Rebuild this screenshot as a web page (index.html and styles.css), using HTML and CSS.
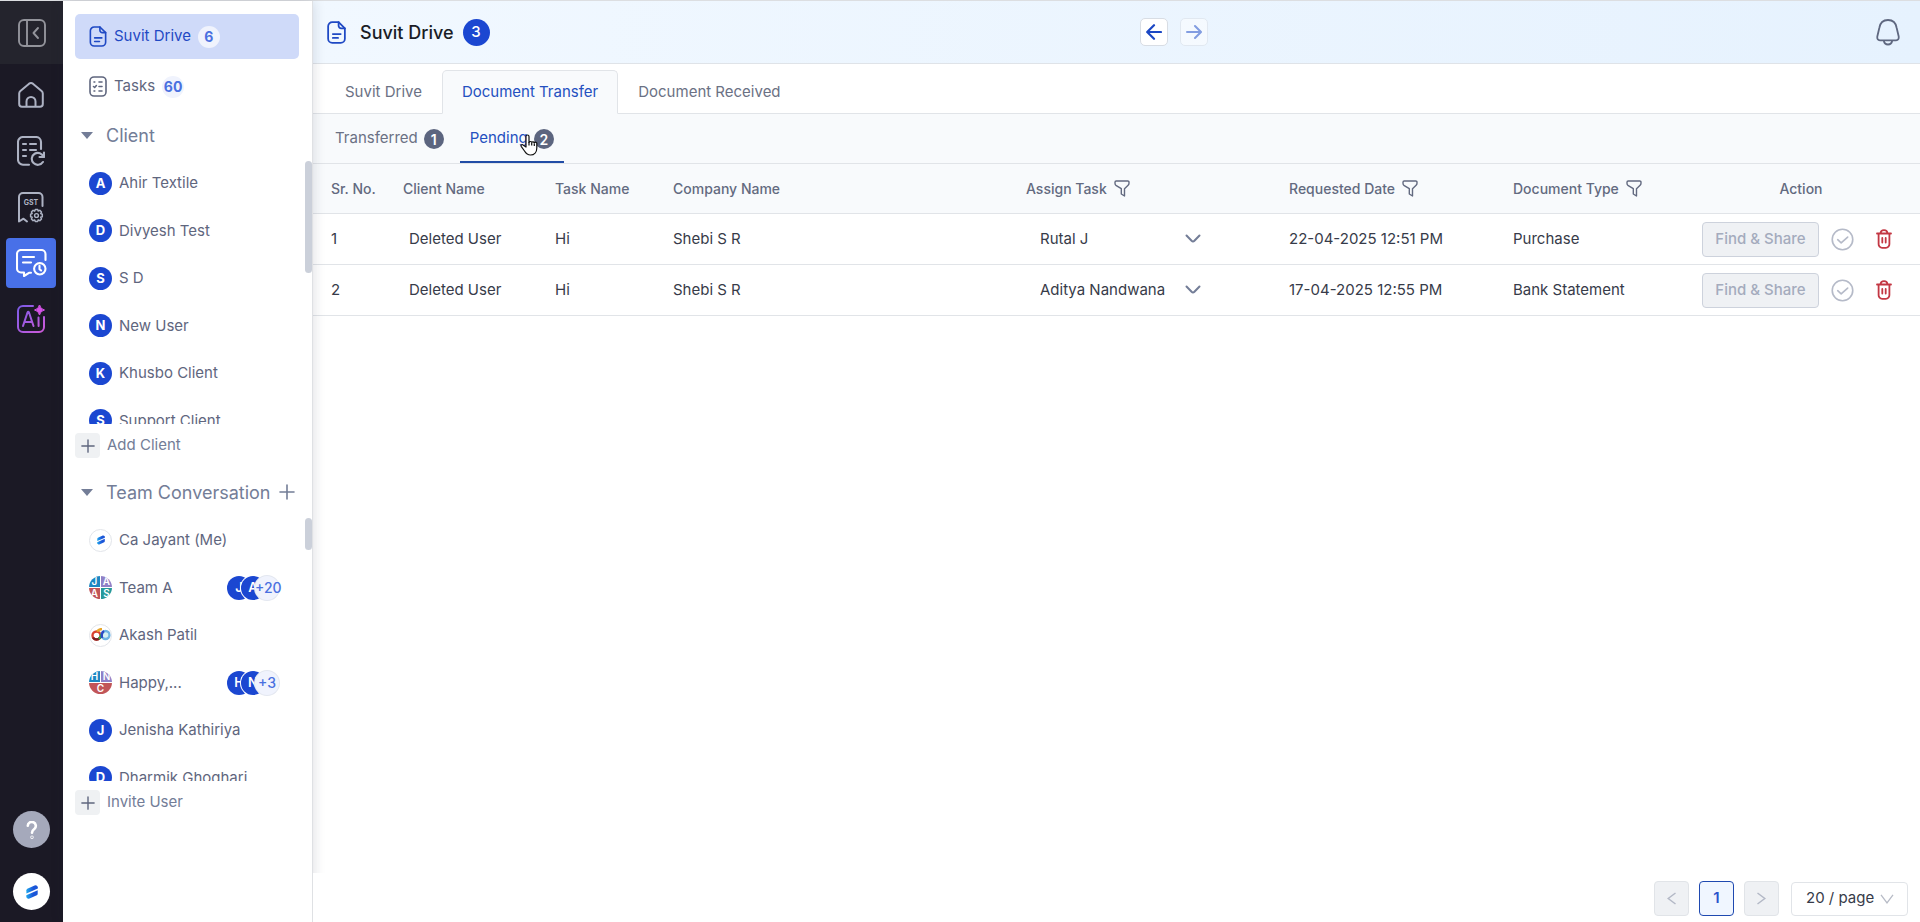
FILE: index.html
```html
<!DOCTYPE html>
<html lang="en">
<head>
<meta charset="utf-8">
<title>Suvit Drive</title>
<link rel="stylesheet" href="styles.css">
</head>
<body>
<svg class="defs" aria-hidden="true">
  <linearGradient id="brand" x1="0" y1="0" x2="1" y2="0"><stop offset="0" stop-color="#1fa8ee"/><stop offset=".6" stop-color="#1b55d8"/></linearGradient>
  <symbol id="doc" viewBox="0 0 18 22"><g fill="none" stroke="currentColor" stroke-width="1.7" stroke-linecap="round" stroke-linejoin="round"><path d="M11 1H5a4 4 0 0 0-4 4v12a4 4 0 0 0 4 4h8a4 4 0 0 0 4-4V7z"/><path d="M11 1v3.500A2.500 2.500 0 0 0 13.500 7H17M5.500 12.500h7.500M5.500 16.200h5"/></g></symbol>
  <symbol id="funnel" viewBox="0 0 16 17"><path d="M2.200 1h11.600a1.200 1.200 0 0 1 1.200 1.200v1a3 3 0 0 1-.9 2.100L10.500 8.700V16l-3.200-2V8.700L1.900 5.300A3 3 0 0 1 1 3.200v-1A1.200 1.200 0 0 1 2.200 1z" fill="none" stroke="currentColor" stroke-width="1.400" stroke-linejoin="round"/></symbol>
  <symbol id="chev" viewBox="0 0 16 10"><path d="M1.500 1.500 6.600 6.800a2 2 0 0 0 2.800 0l5.100-5.300" fill="none" stroke="currentColor" stroke-width="2" stroke-linecap="round"/></symbol>
  <symbol id="plus" viewBox="0 0 16 16"><path d="M8 1v14M1 8h14" fill="none" stroke="currentColor" stroke-width="1.600" stroke-linecap="round"/></symbol>
  <symbol id="check" viewBox="0 0 24 24"><g fill="none" stroke="currentColor" stroke-width="1.700" stroke-linecap="round" stroke-linejoin="round"><circle cx="12" cy="12" r="10.700"/><path d="m7 12.200 3.600 3.300 6.800-6"/></g></symbol>
  <symbol id="trash" viewBox="0 0 16 20"><g fill="none" stroke="currentColor" stroke-width="1.800" stroke-linecap="round" stroke-linejoin="round"><path d="M1 4.500h14M2.600 4.500V15a3.600 3.600 0 0 0 3.600 3.800h3.600a3.600 3.600 0 0 0 3.600-3.800V4.500M4.500 4.200C4.700 2 6 1.200 8 1.200s3.300.8 3.500 3M6.300 9v4.500M9.700 9v4.500"/></g></symbol>
  <symbol id="mark" viewBox="0 0 12 14"><path d="M.4 8.600V5.200q0-1 .9-1.500L8.600.4q1-.4 1.900.2l.9.600q.4.300.4 1v1.400z" fill="url(#brand)"/><path d="M11.700 5.300v3.400q0 1-.9 1.500l-7.300 3.400q-1 .4-1.900-.2l-.9-.6q-.4-.4-.4-1v-1.500z" fill="url(#brand)"/></symbol>
</svg>

<div class="app">
  <nav class="rail" aria-label="Main">
    <button class="rail-toggle" aria-label="Collapse sidebar"><svg width="28" height="28" viewBox="0 0 28 28" fill="none" stroke="currentColor" stroke-width="1.900" stroke-linecap="round" stroke-linejoin="round"><rect x="1" y="1" width="26" height="26" rx="5"/><path d="M9 1v26M20 9l-4.500 5 4.500 5"/></svg></button>
    <div class="rail-items">
      <a href="#" class="rail-link" aria-label="Home"><svg width="26" height="26" viewBox="0 0 26 26" fill="none" stroke="currentColor" stroke-width="2" stroke-linejoin="round"><path d="M1.200 22V11.500q0-1.600 1.200-2.600L10.800 1.900q2.200-1.600 4.400 0l8.400 7q1.200 1 1.200 2.600V22q0 2.800-2.800 2.800H4Q1.200 24.800 1.200 22z"/><path d="M8.500 24.500v-5a4.500 4.500 0 0 1 9 0v5"/></svg></a>
      <a href="#" class="rail-link" aria-label="Reports"><svg width="28" height="30" viewBox="0 0 28 30" fill="none" stroke="currentColor" stroke-width="2.100" stroke-linecap="round" stroke-linejoin="round"><path d="M12 28.800H6a5 5 0 0 1-5-5V6a5 5 0 0 1 5-5h13a5 5 0 0 1 5 5v7"/><path d="M6 8h3M13 8h6M6 14h3M13 14h6M6 20h3"/><path d="M26.500 21a6 6 0 1 0-.6 5M27 16.500V21h-4.500"/></svg></a>
      <a href="#" class="rail-link" aria-label="GST"><svg width="26" height="31" viewBox="0 0 26 31" fill="none" stroke="currentColor" stroke-width="2" stroke-linecap="round" stroke-linejoin="round"><path d="M24.500 14V5a4 4 0 0 0-4-4H5a4 4 0 0 0-4 4v24.500l4.500-2.800L9 29.500"/><text x="13" y="13" text-anchor="middle" class="gst">GST</text><circle cx="18.500" cy="23.500" r="1.900" stroke-width="1.400"/><path stroke-width="1.500" d="m17.300 17.500 2.400 0 .5 1.600 1.600-.8 1.700 1.700-.8 1.600 1.600.7v2.400l-1.600.6.8 1.700-1.700 1.700-1.600-.8-.6 1.600h-2.300l-.6-1.600-1.600.8-1.700-1.700.8-1.700-1.600-.6v-2.400l1.600-.7-.8-1.600 1.700-1.700 1.600.8z"/></svg></a>
      <a href="#" class="rail-link active" aria-label="Conversations"><svg width="31" height="28" viewBox="0 0 31 28" fill="none" stroke="currentColor" stroke-width="2.100" stroke-linecap="round" stroke-linejoin="round"><path d="M29.500 11V5a4 4 0 0 0-4-4H5a4 4 0 0 0-4 4v14.500a4 4 0 0 0 4 4h3v3.500l5-3.200h2"/><path d="M7 8h11M7 13.500h8"/><circle cx="23.800" cy="19.800" r="5.700"/><path d="M23.500 16.700v3.400l1.600 1.400"/></svg></a>
      <a href="#" class="rail-link" aria-label="AI"><svg width="28" height="28" viewBox="0 0 28 28" fill="none" stroke-linecap="round" stroke-linejoin="round"><defs><linearGradient id="ai" gradientUnits="userSpaceOnUse" x1="0" y1="0" x2="28" y2="28"><stop offset="0" stop-color="#7a5be8"/><stop offset="1" stop-color="#d05ad8"/></linearGradient></defs><g stroke="url(#ai)" stroke-width="2"><path d="M16 1H6a5 5 0 0 0-5 5v16a5 5 0 0 0 5 5h16a5 5 0 0 0 5-5V12"/><path d="m6 21 4.500-13.500q.7-1.400 1.500 0L16.500 21M7.500 17h7.500M21.500 12.500l.1 8.500"/></g><path d="M22.500 0q.8 4.200 5 5-4.200.8-5 5-.8-4.200-5-5 4.200-.8 5-5z" fill="#d452e6" stroke="#d452e6"/></svg></a>
    </div>
    <div class="rail-foot">
      <button class="help" aria-label="Help"><svg width="12" height="18" viewBox="0 0 12 18" fill="none" stroke="#fff" stroke-width="2.600" stroke-linecap="round"><path d="M1.800 4.800a4 4 0 1 1 6.700 3C6.800 9 6 9.800 6 11.800"/><circle cx="6" cy="16.200" r=".4"/></svg></button>
      <button class="profile" aria-label="Profile"><svg width="12" height="14"><use href="#mark"/></svg></button>
    </div>
  </nav>

  <aside class="side">
    <a href="#" class="side-link current"><svg width="18" height="21"><use href="#doc"/></svg><span>Suvit Drive</span><span class="pill">6</span></a>
    <a href="#" class="side-link"><svg width="18" height="21" viewBox="0 0 18 21" fill="none" stroke="currentColor" stroke-width="1.600" stroke-linecap="round"><rect x="1" y="1" width="16" height="19" rx="4"/><path d="M10 6h3M10 10.500h3M10 15h3M5 6h.8M5 15h.8M4.500 10.500l1.200 1 1.700-2"/></svg><span>Tasks</span><span class="pill">60</span></a>

    <h2 class="group group-client"><button class="group-toggle"><i class="tri"></i>Client</button></h2>
    <div class="list-wrap">
      <ul class="list">
        <li><span class="av">A</span>Ahir Textile</li>
        <li><span class="av">D</span>Divyesh Test</li>
        <li><span class="av">S</span>S D</li>
        <li><span class="av">N</span>New User</li>
        <li><span class="av">K</span>Khusbo Client</li>
        <li><span class="av">S</span>Support Client</li>
      </ul>
      <i class="thumb thumb-client"></i>
    </div>
    <button class="add"><span class="add-box"><svg width="14" height="14"><use href="#plus"/></svg></span>Add Client</button>

    <h2 class="group group-team"><button class="group-toggle"><i class="tri"></i>Team Conversation</button><button class="group-add" aria-label="New conversation"><svg width="16" height="16"><use href="#plus"/></svg></button></h2>
    <div class="list-wrap">
      <ul class="list">
        <li><span class="av pic"><svg width="8" height="10"><use href="#mark"/></svg></span>Ca Jayant (Me)</li>
        <li><span class="av quad"><b class="q1">J</b><b class="q2">A</b><b class="q3">A</b><b class="q4">S</b></span>Team A<span class="stack"><span class="av">J</span><span class="av">A</span><span class="av more">+20</span></span></li>
        <li><span class="av pic"><svg width="20" height="14" viewBox="0 0 20 14" fill="none" stroke-width="2.400"><circle cx="5.500" cy="7.500" r="4" stroke="#d8412f"/><path d="M2 9.500a4 4 0 0 0 7 0" stroke="#7a1f22"/><circle cx="14.500" cy="7" r="4" fill="#d5f0f2" stroke="#6fb4e4"/><path d="M6 3.500q2-2.500 5-2.500" stroke="#e8a62c"/><path d="M8 11q2-2 2.500-5" stroke="#36b04c"/><path d="M11 10q-1-5 2-7" stroke="#2b49c4"/></svg></span>Akash Patil</li>
        <li><span class="av quad"><b class="q1">H</b><b class="q2">N</b><b class="q3 wide">C</b></span>Happy,...<span class="stack"><span class="av">H</span><span class="av">N</span><span class="av more">+3</span></span></li>
        <li><span class="av">J</span>Jenisha Kathiriya</li>
        <li><span class="av">D</span>Dharmik Ghoghari</li>
      </ul>
      <i class="thumb thumb-team"></i>
    </div>
    <button class="add"><span class="add-box"><svg width="14" height="14"><use href="#plus"/></svg></span>Invite User</button>
  </aside>

  <main class="main">
    <header class="top">
      <svg class="top-icon" width="19" height="23"><use href="#doc"/></svg>
      <h1>Suvit Drive</h1>
      <span class="count">3</span>
      <div class="history">
        <button aria-label="Back"><svg width="16" height="16" viewBox="0 0 16 16" fill="none" stroke="currentColor" stroke-width="2.200" stroke-linecap="round" stroke-linejoin="round"><path d="M15 8H1.500M8 1.200 1.200 8 8 14.800"/></svg></button>
        <button aria-label="Forward" disabled><svg width="16" height="16" viewBox="0 0 16 16" fill="none" stroke="currentColor" stroke-width="2" stroke-linecap="round" stroke-linejoin="round"><path d="M1 8h13.500M9 2l6 6-6 6"/></svg></button>
      </div>
      <button class="bell" aria-label="Notifications"><svg width="24" height="27" viewBox="0 0 24 27" fill="none" stroke="currentColor" stroke-width="1.800" stroke-linejoin="round"><path d="M12 1C7 1 4 4.500 3.300 9L1.300 17.500Q.8 21 4 21.300h16q3.200-.3 2.700-3.800L20.700 9C20 4.500 17 1 12 1z"/><path d="M7.800 21.500q.6 4 4.200 4t4.200-4"/></svg></button>
    </header>

    <nav class="tabs" aria-label="Drive sections">
      <a href="#">Suvit Drive</a>
      <a href="#" class="on" aria-current="page">Document Transfer</a>
      <a href="#">Document Received</a>
    </nav>

    <nav class="subtabs" aria-label="Transfer status">
      <a href="#">Transferred<span class="num">1</span></a>
      <a href="#" class="on" aria-current="page">Pending<span class="num">2</span>
        <svg class="pointer" width="18" height="22" viewBox="0 0 18 22"><path d="M6 13V2.500a1.500 1.500 0 0 1 3 0V8.500a1.500 1.500 0 0 1 2.700-.3 1.500 1.500 0 0 1 2.500.8 1.400 1.400 0 0 1 2.600 1V14c0 4-2.500 7-6.300 7-3 0-4.500-1.500-6-4L1.200 12.300c-.6-1.500 1-2.300 2.200-1.100z" fill="#fff" stroke="#111" stroke-width="1.200" stroke-linejoin="round"/><path d="M9 8v3.500M11.700 8.500v3M14.300 9.500v2.500" stroke="#111" stroke-width="1.200"/></svg></a>
    </nav>

    <div class="table-area">
      <table>
        <colgroup><col class="c-sr"><col class="c-client"><col class="c-task"><col class="c-company"><col class="c-assign"><col class="c-date"><col class="c-type"><col class="c-action"></colgroup>
        <thead>
          <tr>
            <th>Sr. No.</th><th>Client Name</th><th>Task Name</th><th>Company Name</th>
            <th><span class="th">Assign Task<button aria-label="Filter assign task"><svg width="16" height="17"><use href="#funnel"/></svg></button></span></th>
            <th><span class="th">Requested Date<button aria-label="Filter requested date"><svg width="16" height="17"><use href="#funnel"/></svg></button></span></th>
            <th><span class="th">Document Type<button aria-label="Filter document type"><svg width="16" height="17"><use href="#funnel"/></svg></button></span></th>
            <th class="center">Action</th>
          </tr>
        </thead>
        <tbody>
          <tr>
            <td>1</td><td class="indent">Deleted User</td><td>Hi</td><td>Shebi S R</td>
            <td><span class="pick"><select aria-label="Assign task 1"><option>Rutal J</option></select><svg width="16" height="10"><use href="#chev"/></svg></span></td>
            <td>22-04-2025 12:51 PM</td><td>Purchase</td>
            <td><div class="actions"><button class="share" disabled>Find &amp; Share</button><button class="ok" aria-label="Approve"><svg width="23" height="23"><use href="#check"/></svg></button><button class="del" aria-label="Delete"><svg width="16" height="20"><use href="#trash"/></svg></button></div></td>
          </tr>
          <tr>
            <td>2</td><td class="indent">Deleted User</td><td>Hi</td><td>Shebi S R</td>
            <td><span class="pick"><select aria-label="Assign task 2"><option>Aditya Nandwana</option></select><svg width="16" height="10"><use href="#chev"/></svg></span></td>
            <td>17-04-2025 12:55 PM</td><td>Bank Statement</td>
            <td><div class="actions"><button class="share" disabled>Find &amp; Share</button><button class="ok" aria-label="Approve"><svg width="23" height="23"><use href="#check"/></svg></button><button class="del" aria-label="Delete"><svg width="16" height="20"><use href="#trash"/></svg></button></div></td>
          </tr>
        </tbody>
      </table>
    </div>

    <footer class="pager">
      <button class="page" aria-label="Previous page" disabled><svg width="9" height="13" viewBox="0 0 9 13" fill="none" stroke="currentColor" stroke-width="1.500"><path d="M8.500 1 1.200 6.500l7.300 5.500"/></svg></button>
      <button class="page on">1</button>
      <button class="page" aria-label="Next page" disabled><svg width="9" height="13" viewBox="0 0 9 13" fill="none" stroke="currentColor" stroke-width="1.500"><path d="m.5 1 7.300 5.500L.5 12"/></svg></button>
      <span class="size"><select aria-label="Rows per page"><option>20 / page</option></select><svg width="14" height="10" viewBox="0 0 14 10" fill="none" stroke="currentColor" stroke-width="1.300"><path d="m1 .8 6 8 6-8"/></svg></span>
    </footer>
  </main>
</div>
</body>
</html>
```

FILE: styles.css
```css
* { box-sizing: border-box; }

body {
  margin: 0;
  font-family: Inter, "Liberation Sans", sans-serif;
  font-size: 15px;
  line-height: 1.5;
  color: #373b49;
  background: #fff;
}

button, select {
  margin: 0;
  padding: 0;
  border: 0;
  background: none;
  font: inherit;
  color: inherit;
  cursor: pointer;
}

button:disabled { cursor: default; }
a { color: inherit; text-decoration: none; }
svg { display: block; flex: none; }
h1, h2 { margin: 0; font-weight: 400; }
.defs { position: absolute; width: 0; height: 0; }

.app {
  display: flex;
  min-height: 100vh;
  border-top: 1px solid #dcdee1;
}

/* Icon rail */
.rail {
  flex: none;
  width: 63px;
  display: flex;
  flex-direction: column;
  background: #1b1925;
  color: #adb2c3;
}

.rail-toggle {
  height: 63px;
  display: grid;
  place-items: center;
  background: #24242d;
  color: #93949b;
}

.rail-items {
  display: flex;
  flex-direction: column;
  align-items: center;
  gap: 6px;
  padding: 6px 1px 0 0;
}

.rail-link {
  width: 50px;
  height: 50px;
  display: grid;
  place-items: center;
  border-radius: 4px;
}

.rail-link.active { background: #4870e8; color: #fff; }
.gst { font: 700 7px Inter, sans-serif; fill: currentColor; stroke: none; }

.rail-foot {
  margin-top: auto;
  padding-bottom: 12px;
  display: flex;
  flex-direction: column;
  align-items: center;
  gap: 25px;
}

.help, .profile {
  width: 37px;
  height: 37px;
  display: grid;
  place-items: center;
  border-radius: 50%;
  background: #a5a9bb;
}

.profile { background: #fff; }

/* Sidebar */
.side {
  position: relative;
  z-index: 1;
  flex: none;
  width: 250px;
  padding-top: 13px;
  background: #fff;
  border-right: 1px solid #dfe1e4;
  box-shadow: 0 0 12px rgba(30, 40, 60, .16);
  color: #5f667e;
}

.side-link {
  height: 45px;
  margin: 0 13px 5px 12px;
  padding: 0 14px;
  display: flex;
  align-items: center;
  gap: 7px;
  border-radius: 5px;
}

.side-link.current { background: #cfdaf9; color: #1f49c4; }

.pill {
  min-width: 22px;
  height: 22px;
  display: grid;
  place-items: center;
  border-radius: 11px;
  background: #f0f3fd;
  color: #4a70e0;
  font-size: 14px;
  font-weight: 700;
}

.group {
  padding: 0 17px;
  display: flex;
  align-items: center;
  font-size: 18px;
  color: #737d97;
}

.group-client { height: 46px; padding-bottom: 4px; }
.group-team { height: 50px; }

.group-toggle {
  display: flex;
  align-items: center;
  gap: 13px;
}

.tri {
  border: 6px solid transparent;
  border-top: 7px solid #737d97;
  border-bottom: 0;
  margin-left: 1px;
}

.group-add { margin-left: auto; }

.list-wrap { position: relative; }

.list {
  max-height: 264px;
  margin: 0;
  padding: 0;
  overflow: hidden;
  list-style: none;
}

.list li {
  display: flex;
  align-items: center;
  gap: 7px;
  padding: 12px 33px 13px 26px;
}

.av {
  flex: none;
  width: 23px;
  height: 23px;
  margin: -1px 0;
  display: grid;
  place-items: center;
  border-radius: 50%;
  overflow: hidden;
  background: #1b47d1;
  color: #fff;
  font-size: 13px;
  font-weight: 700;
  line-height: 1;
}

.pic { background: #fff; border: 1px solid #e2e5ea; }

.quad {
  grid-template: 11px 11px / 11px 11px;
  gap: 1px;
  place-items: stretch;
  background: #fff;
  font-size: 10px;
  line-height: 11px;
  text-align: center;
}

.quad b { font-weight: 600; }
.q1 { background: #1c86c2; }
.q2 { background: #8f80c6; }
.q3 { background: #c15558; }
.q4 { background: #27999a; }
.wide { grid-column: span 2; }

.stack { display: flex; margin-left: auto; }
.stack .av { width: 24px; height: 24px; overflow: visible; box-shadow: 0 0 0 1px #fff; font-weight: 600; }
.stack .av + .av { margin-left: -10px; }
.stack .more {
  background: #f0f3fd;
  color: #4a70e0;
  box-shadow: 0 0 0 1px #e3e7f0;
  font-size: 14px;
  font-weight: 500;
}

.thumb {
  position: absolute;
  right: 0;
  width: 7px;
  border-radius: 4px;
  background: #cbd0da;
}

.thumb-client { top: 1px; height: 112px; }
.thumb-team { top: 1px; height: 32px; }

.add {
  height: 43px;
  padding-left: 12px;
  display: flex;
  align-items: center;
  gap: 7px;
  color: #737d97;
}

.add-box {
  width: 25px;
  height: 25px;
  display: grid;
  place-items: center;
  border-radius: 4px;
  background: #eff1f3;
  color: #5f667e;
}

/* Main column */
.main {
  flex: 1;
  min-width: 0;
  display: flex;
  flex-direction: column;
}

.top {
  height: 63px;
  padding: 0 3px 0 14px;
  display: flex;
  align-items: center;
  border-bottom: 1px solid #dfe3e8;
  background: linear-gradient(90deg, #f1f8ff, #e6f2fe);
}

.top-icon { color: #1f49c4; }
.top h1 { margin: 0 9px 0 14px; font-size: 18px; font-weight: 500; color: #1a1d26; }

.count {
  width: 27px;
  height: 27px;
  display: grid;
  place-items: center;
  border-radius: 50%;
  background: #1b47d1;
  color: #fff;
  font-weight: 500;
}

.history { display: flex; gap: 12px; margin: 0 auto; }

.history button {
  width: 28px;
  height: 28px;
  display: grid;
  place-items: center;
  border: 1px solid #d8dde4;
  border-radius: 5px;
  background: #fff;
  color: #1b47c4;
}

.history button:disabled { opacity: .5; }
.bell { padding: 0 17px; color: #5f6880; }

.tabs {
  height: 50px;
  padding: 0 12px;
  display: flex;
  align-items: flex-end;
  border-bottom: 1px solid #e1e4e8;
  color: #6b7184;
}

.tabs a {
  height: 44px;
  margin-bottom: -1px;
  padding: 0 19px;
  display: flex;
  align-items: center;
  border: 1px solid transparent;
  border-radius: 5px 5px 0 0;
}

.tabs .on {
  border-color: #e1e4e8;
  border-bottom-color: #f8fafc;
  background: #f8fafc;
  color: #2450c0;
}

.subtabs {
  height: 50px;
  padding: 0 12px;
  display: flex;
  gap: 6px;
  border-bottom: 1px solid #e1e4e8;
  background: #f8fafc;
  color: #6b7184;
}

.subtabs a {
  position: relative;
  padding: 0 10px;
  display: flex;
  align-items: center;
  gap: 6px;
  border-top: 2px solid transparent;
  border-bottom: 2px solid transparent;
}

.subtabs .on { color: #2450c0; border-bottom-color: #214ca6; }

.num {
  width: 20px;
  height: 20px;
  display: grid;
  place-items: center;
  border-radius: 50%;
  background: #5c657f;
  color: #fff;
  font-size: 14px;
  font-weight: 600;
}

.pointer { position: absolute; left: 60px; top: 18px; }

/* Table */
.table-area { flex: 1; overflow: hidden; }

table {
  width: 100%;
  table-layout: fixed;
  border-collapse: separate;
  border-spacing: 0;
}

.c-sr { width: 72px; }
.c-client { width: 152px; }
.c-task { width: 118px; }
.c-assign { width: 263px; }
.c-date { width: 224px; }
.c-type { width: 187px; }
.c-action { width: 238px; }

th, td {
  padding: 0 0 0 18px;
  text-align: left;
  white-space: nowrap;
  border-bottom: 1px solid #e1e4e8;
}

th {
  height: 50px;
  background: #f8fafc;
  color: #636a80;
  font-size: 14px;
  font-weight: 500;
}

td { height: 51px; }
.indent { padding-left: 24px; }
.center { padding: 0; text-align: center; }
.th { display: flex; align-items: center; gap: 7px; }

.pick { display: flex; align-items: center; }

.pick select, .size select {
  appearance: none;
  outline: 0;
}

.pick select { width: 175px; height: 36px; padding-left: 14px; }
.pick svg { margin-left: -16px; color: #737d97; pointer-events: none; }

.actions { display: flex; align-items: center; padding-left: 2px; }

.share {
  width: 117px;
  height: 35px;
  border: 1px solid #cdd2dc;
  border-radius: 4px;
  background: #eff1f4;
  color: #a4abbd;
  font-weight: 500;
}

.ok { margin-left: 12px; color: #b5bac8; }
.del { margin-left: 22px; color: #c33743; }

/* Pagination */
.pager {
  position: relative;
  z-index: 2;
  display: flex;
  justify-content: flex-end;
  gap: 10px;
  padding: 8px 12px 6px;
  background: #fff;
}

.page {
  width: 35px;
  height: 35px;
  display: grid;
  place-items: center;
  border: 1px solid #e1e4e8;
  border-radius: 4px;
  background: #eff1f4;
  color: #b3b8c6;
}

.page.on {
  border-color: #1f49b0;
  background: #f0f6ff;
  color: #2c54cc;
  font-weight: 600;
}

.size {
  display: flex;
  align-items: center;
  margin-left: 2px;
}

.size select {
  width: 117px;
  height: 34px;
  padding-left: 14px;
  border: 1px solid #e1e4e8;
  border-radius: 4px;
}

.size svg { margin: 0 14px 0 -28px; color: #b7bbc6; pointer-events: none; }
```
